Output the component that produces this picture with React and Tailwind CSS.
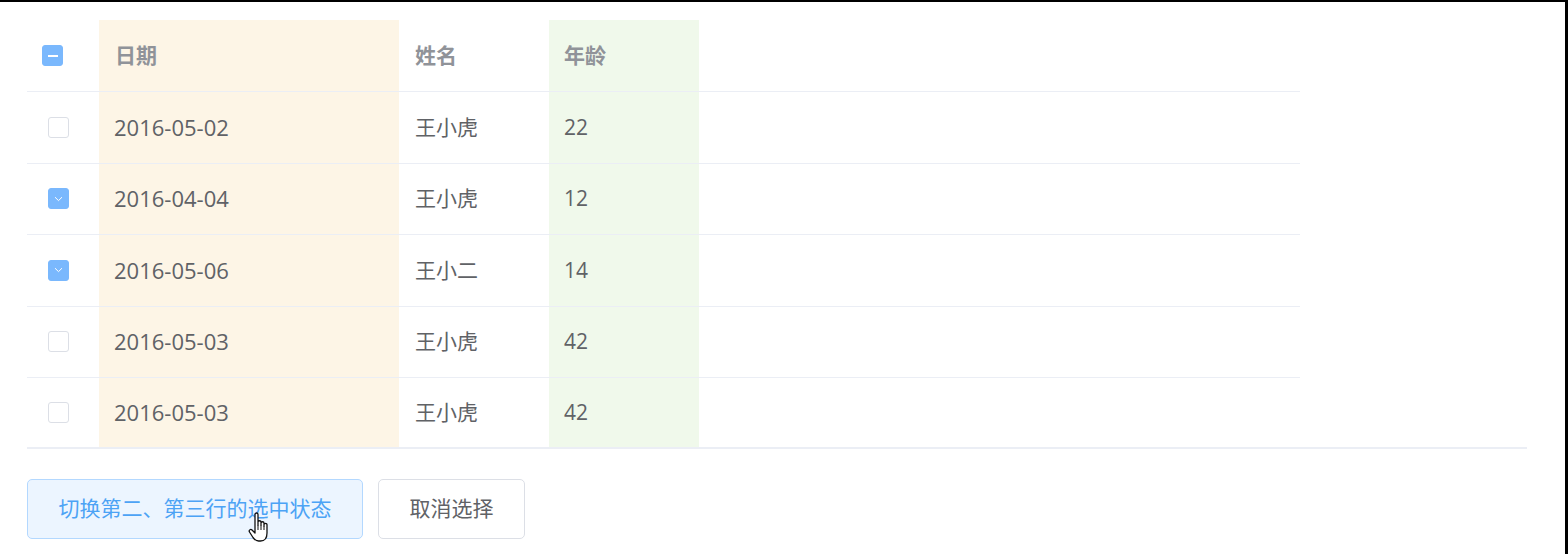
import React, { useState } from 'react';

const rows = [
  { date: '2016-05-02', name: '王小虎', age: 22 },
  { date: '2016-04-04', name: '王小虎', age: 12 },
  { date: '2016-05-06', name: '王小二', age: 14 },
  { date: '2016-05-03', name: '王小虎', age: 42 },
  { date: '2016-05-03', name: '王小虎', age: 42 },
];

function Checkbox({ checked, indeterminate, onClick }) {
  const on = checked || indeterminate;
  return (
    <span
      onClick={onClick}
      className={`w-[21px] h-[21px] rounded-[3px] border flex items-center justify-center cursor-pointer ${
        on ? 'bg-[#7ab8fd] border-[#7ab8fd]' : 'bg-white border-[#dcdfe6]'
      }`}
    >
      {indeterminate && <span className="w-[10px] h-[2px] bg-white" />}
      {checked && (
        <svg width="9" height="6" viewBox="0 0 9 6">
          <path d="M1 1.2 L4.5 4.6 L8 1.2" fill="none" stroke="#fff" strokeWidth="1" />
        </svg>
      )}
    </span>
  );
}

export default function App() {
  const [selected, setSelected] = useState([1, 2]);

  const toggle = (i) =>
    setSelected((s) => (s.includes(i) ? s.filter((x) => x !== i) : [...s, i]));

  const all = selected.length === rows.length;
  const some = selected.length > 0 && !all;

  return (
    <div
      className="w-[1568px] h-[554px] bg-white border-t-2 border-r-[3px] border-black overflow-hidden relative"
      style={{ fontFamily: '"Open Sans", "Noto Sans CJK SC", sans-serif' }}
    >
      <div className="ml-[27px] mt-[18px] w-[1500px] border-b-2 border-[#ebeef5]">
        <div className="w-[1273px]">
          <div className="flex h-[72px] border-b border-[#ebeef5] text-[21px] font-bold text-[#909399]">
            <div className="w-[72px] flex items-center pl-[15px]">
              <Checkbox
                checked={all}
                indeterminate={some}
                onClick={() => setSelected(all ? [] : rows.map((_, i) => i))}
              />
            </div>
            <div className="w-[300px] bg-[#fdf5e6] flex items-center pl-[16px]">日期</div>
            <div className="w-[150px] flex items-center pl-[16px]">姓名</div>
            <div className="w-[150px] bg-[#f0f9eb] flex items-center pl-[15px]">年龄</div>
          </div>
          {rows.map((r, i) => {
            const last = i === rows.length - 1;
            return (
              <div
                key={i}
                className={`flex text-[21px] text-[#606266] ${
                  last ? 'h-[68.5px]' : 'h-[71.5px] border-b border-[#ebeef5]'
                }`}
              >
                <div className="w-[72px] flex items-center pl-[21px]">
                  <Checkbox checked={selected.includes(i)} onClick={() => toggle(i)} />
                </div>
                <div className="w-[300px] bg-[#fdf5e6] flex items-center pl-[15px] text-[22px]">{r.date}</div>
                <div className="w-[150px] flex items-center pl-[16px]">{r.name}</div>
                <div className="w-[150px] bg-[#f0f9eb] flex items-center pl-[15px]">{r.age}</div>
              </div>
            );
          })}
        </div>
      </div>

      <div className="ml-[27px] mt-[30px] flex gap-[15px]">
        <button
          onClick={() =>
            setSelected((s) =>
              [1, 2].filter((x) => !s.includes(x)).concat(s.filter((x) => x !== 1 && x !== 2))
            )
          }
          className="w-[336px] h-[60px] rounded-[5px] border border-[#b3d8ff] bg-[#ecf5ff] text-[#4ca3f5] text-[21px]"
        >
          切换第二、第三行的选中状态
        </button>
        <button
          onClick={() => setSelected([])}
          className="w-[147px] h-[60px] rounded-[5px] border border-[#dcdfe6] bg-white text-[#606266] text-[21px]"
        >
          取消选择
        </button>
      </div>

      <svg
        className="absolute left-[248px] top-[509px]"
        width="26"
        height="36"
        viewBox="0 0 26 36"
      >
        <path
          d="M7 3.5 C7 1.5 10 1.5 10 3.5 L10 14 L10 11 C10 9.3 13 9.3 13 11 L13 14 L13 12 C13 10.3 16 10.3 16 12 L16 15 L16 13.5 C16 12 19 12 19 13.5 L19 22 C19 27 16.5 30 12.5 30 L10.5 30 C8 30 6.5 28.5 5 26.5 L1.5 21 C0.5 19.5 2.5 17.5 4 19 L7 22 Z"
          fill="#fff"
          stroke="#111"
          strokeWidth="1.3"
          strokeLinejoin="round"
        />
        <path d="M10 14 L10 19 M13 14 L13 19 M16 15 L16 19" stroke="#111" strokeWidth="1" />
      </svg>
    </div>
  );
}
